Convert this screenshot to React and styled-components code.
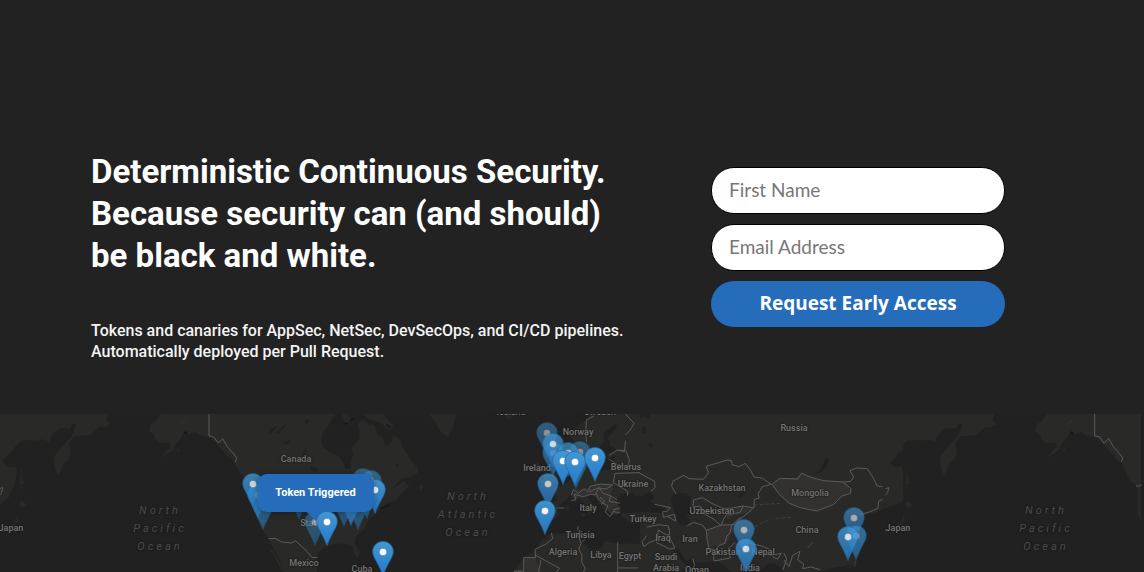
import React from "react";
import styled, { createGlobalStyle } from "styled-components";

const GlobalStyle = createGlobalStyle`
  * { box-sizing: border-box; }
  body { margin: 0; background: #222222; }
`;

const Page = styled.main`
  min-height: 100vh;
  display: flex;
  flex-direction: column;
  background: #222222;
  color: #ffffff;
  font-family: Roboto, "Liberation Sans", sans-serif;
`;

const Hero = styled.section`
  display: flex;
  flex-wrap: wrap;
  justify-content: space-between;
  align-items: flex-start;
  gap: 32px;
  padding: 151px 139px 52px 91px;
`;

const Pitch = styled.div`
  display: flex;
  flex-direction: column;
  gap: 43px;
`;

const Headline = styled.h1`
  margin: 0;
  font-size: 33px;
  line-height: 42px;
  font-weight: 700;
`;

const Summary = styled.p`
  margin: 0;
  font-size: 16px;
  line-height: 21px;
  font-weight: 500;
  color: #f4f4f4;
`;

const SignupForm = styled.form`
  display: flex;
  flex-direction: column;
  gap: 10px;
  width: 294px;
  padding-top: 16px;
`;

const TextField = styled.input`
  height: 47px;
  width: 100%;
  padding: 0 17px 2px;
  border: 1px solid #000000;
  border-radius: 23px;
  background: #ffffff;
  color: #333333;
  font: 400 19px Lato, sans-serif;
  &::placeholder { color: #777777; opacity: 1; }
`;

const SubmitButton = styled.button`
  height: 46px;
  padding: 0 0 2px;
  border: 0;
  border-radius: 23px;
  background: #256cbb;
  color: #ffffff;
  font: 700 19px "Open Sans", sans-serif;
  cursor: pointer;
`;

const MapPanel = styled.section`
  position: relative;
  flex: 1 0 158px;
  overflow: hidden;
`;

const MapArt = styled.svg`
  display: block;
  position: absolute;
  width: 100%;
  height: 100%;
`;

const Place = styled.span`
  position: absolute;
  left: ${(p) => (p.$x / 1144) * 100}%;
  top: ${(p) => p.$y}px;
  transform: translate(-50%, -50%);
  color: #747474;
  font-size: 9px;
  line-height: 11px;
  font-weight: 500;
  text-align: center;
  white-space: pre;
  text-shadow: 0 0 2px #1c1c1c, 0 0 1px #1c1c1c;
`;

const Ocean = styled(Place)`
  color: #4b4b4b;
  font-size: 11px;
  line-height: 18px;
  font-style: italic;
  font-weight: 400;
  letter-spacing: 3px;
`;

const PinMark = styled.svg`
  position: absolute;
  left: ${(p) => (p.$x / 1144) * 100}%;
  top: ${(p) => p.$y}px;
  width: 22px;
  height: 35px;
  margin: -11px 0 0 -11px;
  opacity: ${(p) => p.$fade};
`;

const Callout = styled.div`
  position: absolute;
  left: ${(315.5 / 1144) * 100}%;
  top: 60px;
  transform: translateX(-50%);
  padding: 12px 18px;
  border-radius: 9px;
  background: #256cbb;
  box-shadow: 0 1px 6px rgba(0, 0, 0, 0.35);
  font: 700 11px/14px Roboto, "Liberation Sans", sans-serif;
  white-space: nowrap;
  &::after {
    content: "";
    position: absolute;
    left: 50%;
    top: 100%;
    margin-left: -9px;
    border: 9px solid transparent;
    border-top-color: #256cbb;
    border-bottom: 0;
  }
`;

function Pin({ x, y, fade = 1 }) {
  return (
    <PinMark $x={x} $y={y} $fade={fade} viewBox="0 0 22 35" aria-hidden="true">
      <path
        d="M11 .5C5.200 .5 .7 5 .7 10.500C.7 14.500 3 17.500 5 21.500C7.200 26 9.500 30 11 34.500C12.500 30 14.800 26 17 21.500C19 17.500 21.300 14.500 21.300 10.500C21.300 5 16.800 .5 11 .5Z"
        fill="url(#pinFill)" stroke="#2867a0" strokeWidth=".7"
      />
      <circle cx="11" cy="11" r="3.800" fill="#fff" stroke="#2a6dab" strokeWidth=".6" />
    </PinMark>
  );
}

const backPins = [
  [263, 506, 0.55], [299, 496, 0.4], [344, 503, 0.5], [358, 506, 0.5],
  [351, 502, 0.8], [363, 479, 0.5], [371, 481, 0.55], [367, 495, 0.6],
  [315, 522, 0.45], [258, 495, 0.8], [253, 484, 0.8], [375, 490, 0.95],
  [547, 433, 0.5], [553, 453, 0.6], [553, 444, 0.75], [580, 452, 0.5],
  [568, 453, 0.7], [576, 465, 0.6], [548, 484, 0.75],
  [744, 530, 0.65], [854, 518, 0.6], [856, 536, 0.65],
];

const frontPins = [
  [327, 522, 1], [383, 552, 1], [563, 461, 1], [575, 462, 1], [595, 458, 1],
  [545, 511, 0.95], [746, 549, 0.8], [848, 537, 0.8],
];

const places = [
  ["Canada", 296, 459], ["Mexico", 304, 563], ["Cuba", 362, 569], ["States", 313, 523],
  ["Iceland", 511, 412], ["Sweden", 600, 412], ["Norway", 578, 432],
  ["Ireland", 537, 468], ["Belarus", 626, 467], ["Ukraine", 633, 484],
  ["Italy", 588, 508], ["Turkey", 643, 519], ["Tunisia", 580, 535],
  ["Algeria", 563, 552], ["Libya", 601, 555], ["Egypt", 630, 556],
  ["Saudi\nArabia", 666, 563], ["Iraq", 663, 538], ["Iran", 690, 539],
  ["Oman", 697, 570], ["Russia", 794, 428], ["Kazakhstan", 722, 488],
  ["Uzbekistan", 712, 511], ["Mongolia", 810, 493], ["China", 807, 530],
  ["Pakistan", 723, 552], ["Nepal", 763, 552], ["India", 750, 568],
  ["Japan", 11, 528], ["Japan", 898, 528],
];

const oceans = [
  ["North\nPacific\nOcean", 160, 529],
  ["North\nAtlantic\nOcean", 468, 515],
  ["North\nPacific\nOcean", 1046, 529],
];

const MAP_TOP = 414;

/* Every region group is drawn at three units per map pixel. */
function WorldMap() {
  return (
    <MapArt viewBox="0 0 1144 158" preserveAspectRatio="xMidYMin slice" aria-hidden="true">
      <defs>
        <linearGradient id="pinFill" x1="0" y1="0" x2="0" y2="1">
          <stop offset="0" stopColor="#4298d3" />
          <stop offset="1" stopColor="#247bc9" />
        </linearGradient>
        <g id="pacific">
          <g fill="#292927">
            <path d="M-10 42L324 42L320 60L332 72L314 82L300 80L272 104L240 108L222 108L206 132L213 152L205 180L192 190L174 227L164 204L162 170L180 146L214 110L229 76L219 70L210 86L194 84L176 86L155 105L148 125L125 118L110 122L84 120L62 122L38 150L8 184L28 204L45 198L51 214L45 252L28 290L-10 322Z" />
            <path d="M64 204L68 243L75 247L66 254L63 277L60 240ZM64 302L80 314L72 323L60 320L58 310ZM54 342L56 360L45 376L20 393L-6 398L-6 390L30 382L46 365Z" />
            <path d="M484 42L465 66L452 72L446 92L463 103L466 118L479 129L508 128L512 140L482 174L518 151L527 132L540 120L552 97L568 103L584 96L602 106L626 111L650 130L668 152L692 178L692 42Z" />
          </g>
          <path d="M544 72L558 61M531 153L538 147" stroke="#3a3a38" strokeWidth="2" />
          <path d="M552 97l6-4 4 5-5 6z" fill="#181818" />
          <path d="M-2 266L8 263L5 278L-2 286" fill="none" stroke="#5a5a5a" strokeWidth="3" />
        </g>
      </defs>
      <rect width="1144" height="158" fill="#212121" />

      <g transform="translate(0 -14) scale(.33333)"><use href="#pacific" /></g>

      <g transform="translate(200 -14) scale(.33333)">
        <path fill="#292927" d="M0 42L408 42L396 58L386 74L369 98L363 118L370 143L391 155L415 168L428 184L438 207L453 205L452 180L461 166L454 148L477 116L479 94L471 74L489 58L506 73L522 74L532 102L548 111L556 140L574 126L579 103L599 116L611 146L632 178L654 206L653 219L628 232L604 236L573 270L610 244L629 257L616 271L586 303L560 310L532 340L507 358L496 383L470 408L463 425L478 458L474 475L462 461L457 438L440 432L410 431L380 439L357 455L344 480L355 530L265 530L242 508L220 463L204 446L217 449L238 484L256 521L239 480L218 440L205 413L185 388L171 353L159 300L159 255L143 245L122 222L102 188L89 160L62 131L27 111L0 106Z" />
        <g fill="#212121">
          <path d="M208 88L232 78L218 95L210 103ZM230 96L254 72L258 78L236 101ZM250 126L270 120L272 128L254 133ZM308 164L316 147L320 170ZM315 61L325 58L325 69L315 71ZM585 195L598 192L590 202Z" />
          <path d="M330 198L350 205L352 216L334 213Z" />
        </g>
        <path fill="#292927" d="M425 42L438 42L455 58L437 72ZM490 42L548 42L580 76L570 92L543 70L523 61L502 57ZM686 42L770 42L760 80L745 112L715 79Z" />
        <path fill="none" stroke="#171717" strokeWidth="5" d="M433 73l8-4M453 61l10-5M560 73l12 10M542 327l26-13" />
        <path fill="none" stroke="#5b5b5b" strokeWidth="3" strokeLinejoin="round" d="M27 42V108L39 109L55 129L68 116L82 140L97 157L110 173L107 186M205 416L225 415L246 426L274 429L287 423L304 438L322 455L335 472L352 473" />
      </g>

      <g transform="translate(420 -14) scale(.33333)">
        <g fill="#292927">
          <path d="M239 42L288 42L270 58ZM28 42L108 42L96 68L91 98L82 112L59 91L45 66ZM0 252L12 258L0 275Z" />
          <path d="M352 185L360 194L382 202L382 218L348 216L340 204ZM386 148L405 163L403 180L425 202L432 220L411 229L382 227L399 212L390 190Z" />
          <path d="M720 42L720 370L670 365L630 370L603 345L607 323L620 312L644 306L640 278L612 280L588 308L575 341L551 327L533 304L516 281L497 282L511 303L525 316L508 347L492 310L469 292L453 286L432 306L409 323L420 345L397 362L356 357L359 309L413 302L397 267L432 252L465 232L493 218L500 187L520 192L540 214L580 204L584 168L565 176L558 162L594 151L570 139L564 112L590 84L589 69L550 101L551 125L537 145L526 179L509 184L493 145L464 130L451 104L471 79L497 64L510 42Z" />
          <path d="M280 516L310 475L352 446L362 422L397 400L438 400L478 390L490 399L483 427L511 449L541 446L556 424L608 433L632 430L667 434L720 455L720 520L280 520Z" />
          <path d="M480 337L498 343L490 354ZM437 318L447 315L446 332L438 332Z" />
        </g>
        <g fill="#33312f">
          <path d="M310 475L346 472L360 516H280L291 508H314Z" />
          <path d="M453 286L470 270L502 265L524 252L570 250L580 268L568 288L605 315L605 335L575 344L555 318L520 282L488 287L464 299Z" />
        </g>
        <path fill="#212121" d="M590 300L605 282L652 287L690 300L720 325L720 338L675 340L640 337L602 336Z" />
        <g fill="none" stroke="#5a5a5a" strokeWidth="3" strokeLinejoin="round">
          <path d="M500 126L497 104L499 60L522 48M616 42L642 70L631 90L616 105M617 122L613 155L592 150L568 166M594 151L617 151L628 178L625 200L592 194L568 178M585 220L660 218L665 240L691 244L708 257L701 276L690 272M585 220L580 248L610 266L623 274L622 300" />
          <path d="M454 285L461 268L475 280L493 266L503 275L511 259L540 252L578 255L558 267L534 264L507 276M454 302L468 299L463 283L490 290L512 283L525 285L538 263L549 280L572 287L568 304L604 310L608 334L592 340L582 333L570 350L556 335L564 318L545 307L533 293L530 279M540 291L554 304L543 313M571 287L592 300M579 330L602 323M474 379L473 390M408 324L433 324" />
          <path d="M282 514H311V473H347L345 448L377 433L398 416L394 399M345 465L419 505L405 520M363 480L355 520M479 390L477 411L483 431L476 447L486 466L485 485L496 506L488 520M486 427L494 418M593 427V518M593 504H654M667 432L676 443L693 424L717 416M674 395L687 381L720 380M667 421L674 401L715 401" />
        </g>
      </g>

      <g transform="translate(640 -14) scale(.33333)">
        <path fill="#292927" d="M0 42H790V325H732L708 340L686 342L656 350L650 364L625 370L634 393L670 398L676 430L660 467L638 498L610 516H0Z" />
        <g fill="#33312f">
          <path d="M396 253L425 235L468 233L486 218L506 231L550 242L595 244L621 250L633 278L605 287L580 311L530 334L480 320L448 310L417 282Z" />
          <path d="M198 392L240 374L280 375L307 358L280 392L258 432L224 438L205 448Z" />
          <path d="M252 342L300 317L345 325L316 338L282 346L264 360Z" />
        </g>
        <g fill="#212121">
          <path d="M0 42H32L26 54L10 48L0 58ZM8 78L18 82L17 98L6 101ZM28 128L38 134L34 142L27 137ZM520 222L538 213L548 194L559 170L567 181L559 200L540 219ZM748 188L765 175L775 159L790 148V220L770 203Z" />
          <path d="M-60 285L0 290L31 275L43 294L30 306L78 326L74 340L25 337L-10 335L-60 340ZM93 302L103 277L141 282L153 291L149 318L164 328L158 342L139 343L150 364L144 375L117 373L107 345Z" />
          <path d="M102 437L124 459L139 484L150 476L160 470L168 488L205 488L228 480L250 495L272 516H120L146 497L128 487L110 461ZM358 516L381 492L402 490L425 505L429 516ZM540 518L560 508L600 500L632 493L620 520Z" />
          <path d="M780 310L745 321L702 345L690 366L694 401L673 425L658 464L640 500V520H790V300Z" />
          <path d="M293 292L307 276L318 282L304 289Z" />
        </g>
        <g fill="none" stroke="#5b5b5b" strokeWidth="3" strokeLinejoin="round">
          <path d="M108 282L95 259L98 244L131 226L147 236L190 238L206 218L198 199L236 188L261 180L275 182L276 194L297 200L316 190L332 211L342 231L366 234L394 253L367 260L354 283L358 294L343 298L342 324L310 318L275 324L265 337L251 356L243 377L222 358L190 340L182 319L159 320L161 300L188 293L219 312L249 325L278 325" />
          <path d="M396 253L417 282L448 310L480 323L530 333L580 314L606 288L632 280L633 266L608 246L550 242L507 230L485 219L473 237L420 235L396 253M608 246L632 244L641 231L630 212L650 204L682 206L699 232L711 258L745 262L733 296L716 303L714 325L688 336L660 344M310 318L300 337L263 345M302 352L275 376L270 399L260 409L255 430L238 436L225 450L207 445L202 422L199 391L188 376L161 367L142 377M199 391L244 375L282 374L312 348L337 328" />
          <path d="M205 446L221 460L222 483L271 474L265 447L285 427" />
          <path d="M330 430L365 438L389 448L397 465L424 460L413 477L398 471M431 459L440 476L429 510M432 480L447 499L458 466L480 454L473 480L491 492L488 506L513 501L540 509M365 448L375 462L395 466" />
          <path d="M0 220L44 244L45 263L32 274M44 313L91 323L80 335L68 335L70 352L104 343M83 350L107 363L104 345M20 381L57 374L85 378L90 403L79 405L56 390L48 420L27 428L12 440L6 426L20 407M86 406L105 444L89 447L48 427M158 475L164 496L149 520" />
        </g>
        <path fill="none" stroke="#3e3e3e" strokeWidth="3" strokeDasharray="12 5" d="M320 395L352 382M343 380L392 356M407 355L459 351M342 315L421 310" />
        <path d="M503 444L520 426M648 481L643 499" stroke="#3b3b3b" strokeWidth="4" />
      </g>

      <g transform="translate(886 -14) scale(.33333)">
        <use href="#pacific" />
        <path fill="#292927" d="M690 42H765V363L754 340V260L730 239L707 190L690 180Z" />
        <path fill="none" stroke="#5b5b5b" strokeWidth="3" strokeLinejoin="round" d="M626 42V108L640 110L654 130L668 116L682 140L697 157L710 173L707 186M750 258H760L767 254" />
      </g>
    </MapArt>
  );
}

export default function App() {
  return (
    <Page>
      <GlobalStyle />
      <Hero>
        <Pitch>
          <Headline>
            Deterministic Continuous Security.<br />
            Because security can (and should)<br />
            be black and white.
          </Headline>
          <Summary>
            Tokens and canaries for AppSec, NetSec, DevSecOps, and CI/CD pipelines.<br />
            Automatically deployed per Pull Request.
          </Summary>
        </Pitch>
        <SignupForm onSubmit={(e) => e.preventDefault()}>
          <TextField type="text" name="firstName" aria-label="First Name" placeholder="First Name" />
          <TextField type="email" name="email" aria-label="Email Address" placeholder="Email Address" />
          <SubmitButton type="submit">Request Early Access</SubmitButton>
        </SignupForm>
      </Hero>
      <MapPanel aria-label="Triggered tokens around the world">
        <WorldMap />
        {places.map(([name, x, y]) => (
          <Place key={name + x} $x={x} $y={y - MAP_TOP}>{name}</Place>
        ))}
        {oceans.map(([name, x, y]) => (
          <Ocean key={name + x} $x={x} $y={y - MAP_TOP}>{name}</Ocean>
        ))}
        {backPins.map(([x, y, fade]) => (
          <Pin key={`${x}-${y}`} x={x} y={y - MAP_TOP} fade={fade} />
        ))}
        <Callout role="status">Token Triggered</Callout>
        {frontPins.map(([x, y, fade]) => (
          <Pin key={`${x}-${y}`} x={x} y={y - MAP_TOP} fade={fade} />
        ))}
      </MapPanel>
    </Page>
  );
}
